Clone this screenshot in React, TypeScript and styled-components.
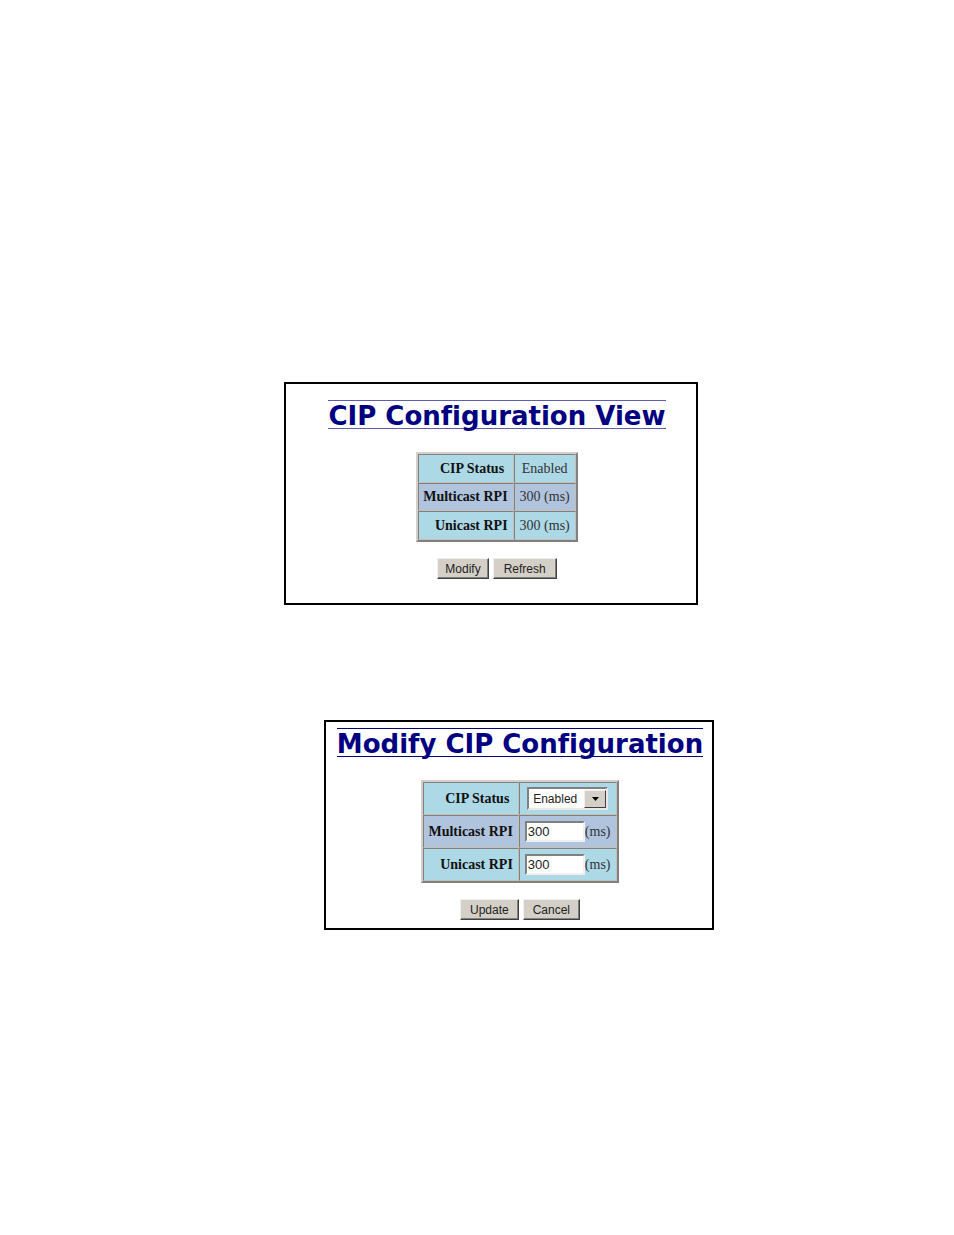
import React, { FC, ReactNode } from 'react';
import styled, { createGlobalStyle } from 'styled-components';

const GlobalStyle = createGlobalStyle`
  body {
    margin: 0;
    background: #fff;
  }
`;

const Page = styled.main`
  box-sizing: border-box;
  min-height: 100vh;
  padding: 382px 0 305px;
  display: flex;
  flex-direction: column;
  align-items: center;
  gap: 115px;
  font-family: 'Liberation Serif', 'Times New Roman', serif;
  font-size: 14px;
  color: #111;
`;

interface PanelProps {
  $width: number;
  $shift: number;
  $padding: string;
}

const Panel = styled.section<PanelProps>`
  box-sizing: border-box;
  width: 100%;
  max-width: ${({ $width }) => $width}px;
  margin-left: ${({ $shift }) => $shift}px;
  padding: ${({ $padding }) => $padding};
  border: 2px solid #000;
  display: flex;
  flex-direction: column;
  align-items: center;
`;

const Title = styled.h1<{ $rule: string }>`
  margin: 0 0 23px;
  padding-top: 4px;
  border-top: 1px solid ${({ $rule }) => $rule};
  border-bottom: 1px solid ${({ $rule }) => $rule};
  font: bold 26px/23px 'DejaVu Sans', Verdana, sans-serif;
  font-variant-ligatures: none;
  color: #000080;
  white-space: nowrap;
`;

const ConfigTable = styled.table`
  border: 2px solid;
  border-color: #d4d0c8 #808080 #808080 #d4d0c8;
  border-spacing: 0;
`;

const Row = styled.tr<{ $height: number }>`
  height: ${({ $height }) => $height}px;
  background: #add8e6;

  &:nth-child(even) {
    background: #b0c4de;
  }
`;

const Label = styled.th`
  padding: 0 5px 0 4px;
  border: 1px solid;
  border-color: #808080 #c4c0b8 #c4c0b8 #808080;
  text-align: right;
  white-space: nowrap;
`;

const Value = styled.td`
  padding: 0 5px;
  border: 1px solid;
  border-color: #808080 #c4c0b8 #c4c0b8 #808080;
  text-align: center;
  white-space: nowrap;
  color: #333;
`;

const Field = styled.div`
  display: flex;
  align-items: center;
  justify-content: center;
`;

const TextInput = styled.input`
  box-sizing: border-box;
  width: 60px;
  height: 21px;
  margin: 0;
  padding: 0 1px;
  border: 2px solid;
  border-color: #808080 #f0f0f0 #f0f0f0 #808080;
  border-radius: 0;
  background: #fff;
  font: 13px 'Liberation Sans', Arial, sans-serif;
  color: #222;
`;

const SelectBox = styled.div`
  position: relative;
  display: inline-flex;
  box-sizing: border-box;
  width: 81px;
  height: 23px;
  border: 2px solid;
  border-color: #808080 #e8e8e8 #e8e8e8 #808080;
  background: #fff;
`;

const Select = styled.select`
  appearance: none;
  width: 100%;
  margin: 0;
  padding: 0 24px 0 4px;
  border: 0;
  border-radius: 0;
  background: transparent;
  font: 12px 'Liberation Sans', Arial, sans-serif;
  color: #222;
`;

const SelectArrow = styled.span`
  position: absolute;
  top: 1px;
  right: 0;
  bottom: 0;
  width: 20px;
  display: flex;
  align-items: center;
  justify-content: center;
  border: 1px solid;
  border-color: #f0f0f0 #404040 #404040 #f0f0f0;
  background: #d4d0c8;
  pointer-events: none;
`;

const ButtonRow = styled.div`
  display: flex;
  gap: 4px;
  margin-top: 16px;
`;

const Button = styled.button<{ $pad: number }>`
  box-sizing: border-box;
  height: 21px;
  padding: 0 ${({ $pad }) => $pad}px;
  border: 1px solid;
  border-color: #f0f0f0 #404040 #404040 #f0f0f0;
  border-radius: 0;
  background: #d4d0c8;
  box-shadow: inset -1px -1px #808080;
  font: 12px 'Liberation Sans', Arial, sans-serif;
  color: #222;
`;

interface ConfigRowProps {
  label: ReactNode;
  htmlFor?: string;
  height: number;
  children: ReactNode;
}

const ConfigRow: FC<ConfigRowProps> = ({ label, htmlFor, height, children }) => (
  <Row $height={height}>
    <Label scope="row">{htmlFor ? <label htmlFor={htmlFor}>{label}</label> : label}</Label>
    <Value>{children}</Value>
  </Row>
);

const ConfigView: FC = () => (
  <Panel $width={414} $shift={28} $padding="16px 0 24px 12px">
    <Title $rule="#5c5cb0">CIP Configuration View</Title>
    <ConfigTable>
      <tbody>
        <ConfigRow height={29} label={<>CIP Status&nbsp;</>}>Enabled</ConfigRow>
        <ConfigRow height={28} label="Multicast RPI">300 (ms)</ConfigRow>
        <ConfigRow height={29} label="Unicast RPI">300 (ms)</ConfigRow>
      </tbody>
    </ConfigTable>
    <ButtonRow>
      <Button type="button" $pad={7}>Modify</Button>
      <Button type="button" $pad={10}>Refresh</Button>
    </ButtonRow>
  </Panel>
);

const ModifyConfig: FC = () => (
  <Panel $width={390} $shift={84} $padding="6px 0 8px 2px">
    <Title $rule="#000080">Modify CIP Configuration</Title>
    <ConfigTable>
      <tbody>
        <ConfigRow height={33} htmlFor="cip-status" label={<>CIP Status&nbsp;</>}>
          <Field>
            <SelectBox>
              <Select id="cip-status" defaultValue="enabled">
                <option value="enabled">Enabled</option>
                <option value="disabled">Disabled</option>
              </Select>
              <SelectArrow>
                <svg width="7" height="4" viewBox="0 0 7 4" aria-hidden="true">
                  <path d="M0 0h7L3.5 4z" fill="#000" />
                </svg>
              </SelectArrow>
            </SelectBox>
          </Field>
        </ConfigRow>
        <ConfigRow height={33} htmlFor="multicast-rpi" label="Multicast RPI">
          <Field>
            <TextInput id="multicast-rpi" type="text" defaultValue="300" />
            (ms)
          </Field>
        </ConfigRow>
        <ConfigRow height={33} htmlFor="unicast-rpi" label="Unicast RPI">
          <Field>
            <TextInput id="unicast-rpi" type="text" defaultValue="300" />
            (ms)
          </Field>
        </ConfigRow>
      </tbody>
    </ConfigTable>
    <ButtonRow>
      <Button type="button" $pad={9}>Update</Button>
      <Button type="button" $pad={9}>Cancel</Button>
    </ButtonRow>
  </Panel>
);

const App: FC = () => (
  <Page>
    <GlobalStyle />
    <ConfigView />
    <ModifyConfig />
  </Page>
);

export default App;
